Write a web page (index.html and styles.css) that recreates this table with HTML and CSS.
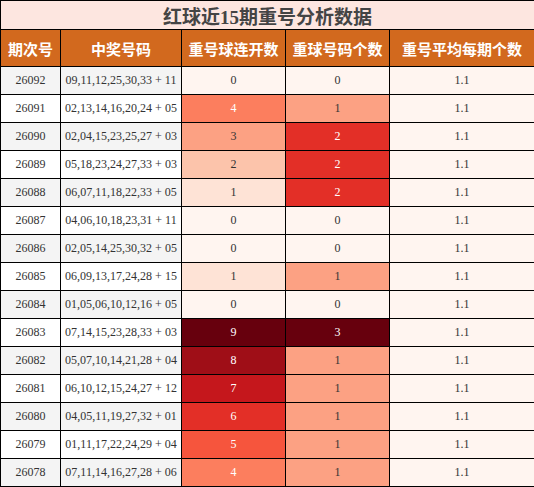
FILE: index.html
```html
<!DOCTYPE html>
<html lang="zh">
<head>
    <meta charset="UTF-8">
    <title>红球近15期重号分析数据</title>
    <link rel="stylesheet" href="styles.css">
</head>
<body>
    <table class="stats">
        <colgroup>
            <col class="c-issue">
            <col class="c-nums">
            <col class="c-run">
            <col class="c-count">
            <col class="c-avg">
        </colgroup>
        <thead>
            <tr><th colspan="5" class="title">红球近15期重号分析数据</th></tr>
            <tr class="head">
                <th>期次号</th>
                <th>中奖号码</th>
                <th>重号球连开数</th>
                <th>重球号码个数</th>
                <th>重号平均每期个数</th>
            </tr>
        </thead>
        <tbody>
            <tr><td>26092</td><td>09,11,12,25,30,33 + 11</td><td class="r0">0</td><td class="q0">0</td><td class="avg">1.1</td></tr>
            <tr><td>26091</td><td>02,13,14,16,20,24 + 05</td><td class="r4">4</td><td class="q1">1</td><td class="avg">1.1</td></tr>
            <tr><td>26090</td><td>02,04,15,23,25,27 + 03</td><td class="r3">3</td><td class="q2">2</td><td class="avg">1.1</td></tr>
            <tr><td>26089</td><td>05,18,23,24,27,33 + 03</td><td class="r2">2</td><td class="q2">2</td><td class="avg">1.1</td></tr>
            <tr><td>26088</td><td>06,07,11,18,22,33 + 05</td><td class="r1">1</td><td class="q2">2</td><td class="avg">1.1</td></tr>
            <tr><td>26087</td><td>04,06,10,18,23,31 + 11</td><td class="r0">0</td><td class="q0">0</td><td class="avg">1.1</td></tr>
            <tr><td>26086</td><td>02,05,14,25,30,32 + 05</td><td class="r0">0</td><td class="q0">0</td><td class="avg">1.1</td></tr>
            <tr><td>26085</td><td>06,09,13,17,24,28 + 15</td><td class="r1">1</td><td class="q1">1</td><td class="avg">1.1</td></tr>
            <tr><td>26084</td><td>01,05,06,10,12,16 + 05</td><td class="r0">0</td><td class="q0">0</td><td class="avg">1.1</td></tr>
            <tr><td>26083</td><td>07,14,15,23,28,33 + 03</td><td class="r9">9</td><td class="q3">3</td><td class="avg">1.1</td></tr>
            <tr><td>26082</td><td>05,07,10,14,21,28 + 04</td><td class="r8">8</td><td class="q1">1</td><td class="avg">1.1</td></tr>
            <tr><td>26081</td><td>06,10,12,15,24,27 + 12</td><td class="r7">7</td><td class="q1">1</td><td class="avg">1.1</td></tr>
            <tr><td>26080</td><td>04,05,11,19,27,32 + 01</td><td class="r6">6</td><td class="q1">1</td><td class="avg">1.1</td></tr>
            <tr><td>26079</td><td>01,11,17,22,24,29 + 04</td><td class="r5">5</td><td class="q1">1</td><td class="avg">1.1</td></tr>
            <tr><td>26078</td><td>07,11,14,16,27,28 + 06</td><td class="r4">4</td><td class="q1">1</td><td class="avg">1.1</td></tr>
        </tbody>
    </table>
</body>
</html>
```

FILE: styles.css
```css
body {
    margin: 0;
    background-color: #fff;
    font-family: "Liberation Serif", "Noto Sans CJK SC", serif;
}
.stats {
    width: 534px;
    border-collapse: collapse;
    table-layout: fixed;
    border: 1px solid #000;
}
.c-issue { width: 60px; }
.c-nums { width: 121px; }
.c-run { width: 104px; }
.c-count { width: 104px; }
.c-avg { width: 145px; }
.stats th, .stats td {
    border: 1px solid #000;
    padding: 0;
    text-align: center;
}
.title {
    height: 28px;
    background-color: #fde6e0;
    color: #444;
    font-size: 19px;
    font-weight: bold;
}
.head th {
    height: 36px;
    background-color: #d2691e;
    color: #fff;
    font-family: "Noto Sans CJK SC", sans-serif;
    font-size: 15px;
    font-weight: bold;
}
.stats td {
    height: 27px;
    font-size: 12px;
    color: #333;
    background-color: #fff;
}
/* zebra only on the issue and numbers columns */
.stats tbody tr:nth-child(odd) td:nth-child(-n+2) {
    background-color: #f4f4f4;
}
.stats td.avg { background-color: #fff5f0; }
.stats td.r0, .stats td.q0 { background-color: #fff5f0; }
.stats td.r1 { background-color: #fee3d6; }
.stats td.r2 { background-color: #fcc4ab; }
.stats td.r3, .stats td.q1 { background-color: #fca183; }
.stats td.r4 { background-color: #fc7e5e; color: #fff; }
.stats td.r5 { background-color: #f6553d; color: #fff; }
.stats td.r6, .stats td.q2 { background-color: #e32f27; color: #fff; }
.stats td.r7 { background-color: #c5171c; color: #fff; }
.stats td.r8 { background-color: #9f0e17; color: #fff; }
.stats td.r9, .stats td.q3 { background-color: #67000d; color: #fff; }
```
